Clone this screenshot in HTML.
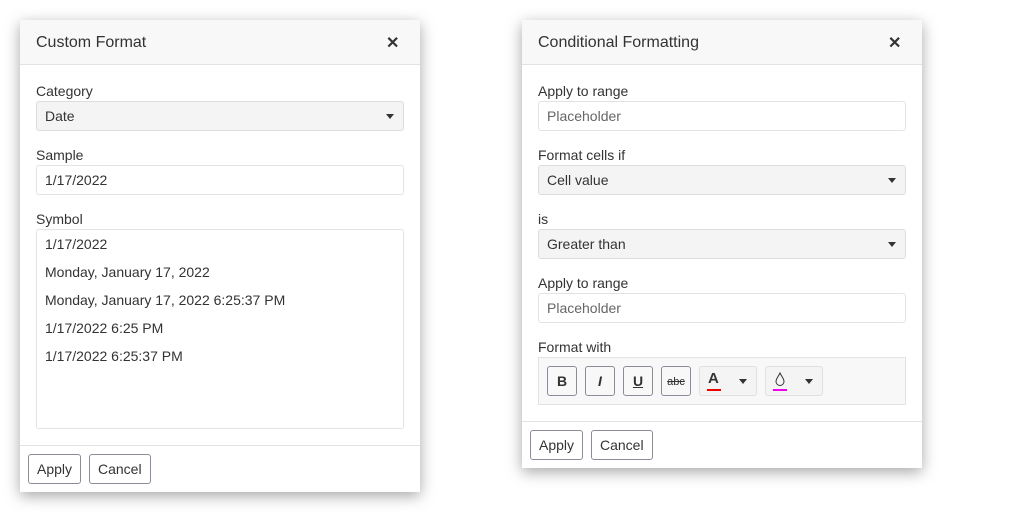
<!DOCTYPE html>
<html><head><style>
*{box-sizing:border-box;margin:0;padding:0}
body{width:1024px;height:512px;background:#fff;font-family:"Liberation Sans",sans-serif;color:#333;position:relative;overflow:hidden}
.dlg{position:absolute;background:#fff;box-shadow:0 4px 14px rgba(0,0,0,.35);width:400px}
.hd{height:45px;background:#f8f8f8;border-bottom:1px solid #e3e3e3;position:relative}
.hd span{position:absolute;left:16px;top:14px;font-size:16px;color:#333}
.hd b{position:absolute;left:366px;top:13px;font-size:16px;color:#333}
.a{position:absolute}
.lbl{font-size:14px;color:#333}
.fld{position:absolute;left:16px;width:368px;height:30px;border:1px solid #e3e3e3;border-radius:3px;font-size:14px;padding:6px 8px;background:#fff}
.sel{background:#f4f4f4;border-color:#ddd}
.sel:after{content:"";position:absolute;right:9px;top:12px;border-left:4px solid transparent;border-right:4px solid transparent;border-top:5px solid #333}
.ft{position:absolute;left:0;width:400px;border-top:1px solid #e3e3e3}
.btn{position:absolute;height:30px;border:1px solid #8e8a9a;border-radius:3px;font-size:14px;padding:6px 8px;background:#fff}
.tb{position:absolute;width:30px;height:30px;border:1px solid #8e8a9a;border-radius:3px;background:#f8f8f8;text-align:center;line-height:28px;font-size:14px}
.dd{position:absolute;width:58px;height:30px;border:1px solid #e0e0e0;border-radius:3px;background:#f4f4f4}
.dd:after{content:"";position:absolute;right:9px;top:12px;border-left:4px solid transparent;border-right:4px solid transparent;border-top:5px solid #333}
.it{position:absolute;left:8px;font-size:14px}
</style></head><body>
<div class="dlg" style="left:20px;top:20px;height:472px">
 <div class="hd"><span>Custom Format</span><b>✕</b></div>
 <div class="a lbl" style="left:16px;top:63px">Category</div>
 <div class="fld sel" style="top:81px">Date</div>
 <div class="a lbl" style="left:16px;top:127px">Sample</div>
 <div class="fld" style="top:145px">1/17/2022</div>
 <div class="a lbl" style="left:16px;top:191px">Symbol</div>
 <div class="fld" style="top:209px;height:200px;padding:0">
  <div class="it" style="top:6px">1/17/2022</div>
  <div class="it" style="top:34px">Monday, January 17, 2022</div>
  <div class="it" style="top:62px">Monday, January 17, 2022 6:25:37 PM</div>
  <div class="it" style="top:90px">1/17/2022 6:25 PM</div>
  <div class="it" style="top:118px">1/17/2022 6:25:37 PM</div>
 </div>
 <div class="ft" style="top:425px"></div>
 <div class="btn" style="left:8px;top:434px;width:53px">Apply</div>
 <div class="btn" style="left:69px;top:434px;width:62px">Cancel</div>
</div>
<div class="dlg" style="left:522px;top:20px;height:448px">
 <div class="hd"><span>Conditional Formatting</span><b>✕</b></div>
 <div class="a lbl" style="left:16px;top:63px">Apply to range</div>
 <div class="fld" style="top:81px;color:#666">Placeholder</div>
 <div class="a lbl" style="left:16px;top:127px">Format cells if</div>
 <div class="fld sel" style="top:145px">Cell value</div>
 <div class="a lbl" style="left:16px;top:191px">is</div>
 <div class="fld sel" style="top:209px">Greater than</div>
 <div class="a lbl" style="left:16px;top:255px">Apply to range</div>
 <div class="fld" style="top:273px;color:#666">Placeholder</div>
 <div class="a lbl" style="left:16px;top:319px">Format with</div>
 <div class="a" style="left:16px;top:337px;width:368px;height:48px;border:1px solid #e3e3e3;background:#f8f8f8"></div>
 <div class="tb" style="left:25px;top:346px;font-weight:bold">B</div>
 <div class="tb" style="left:63px;top:346px;font-style:italic;font-weight:bold">I</div>
 <div class="tb" style="left:101px;top:346px;font-weight:bold;text-decoration:underline">U</div>
 <div class="tb" style="left:139px;top:346px;font-size:11px;line-height:30px;text-decoration:line-through">abc</div>
 <div class="dd" style="left:177px;top:346px"><div class="a" style="left:8px;top:3px;font-size:15px;font-weight:bold">A</div><div class="a" style="left:7px;top:22px;width:14px;height:2px;background:#e00"></div></div>
 <div class="dd" style="left:243px;top:346px"><svg class="a" style="left:8px;top:5px" width="12" height="14" viewBox="0 0 12 14"><path d="M6 1C4 5 2 7 2 9.5a4 4 0 0 0 8 0C10 7 8 5 6 1z" fill="none" stroke="#333" stroke-width="1"/></svg><div class="a" style="left:7px;top:22px;width:14px;height:2px;background:#e0e"></div></div>
 <div class="ft" style="top:401px"></div>
 <div class="btn" style="left:8px;top:410px;width:53px">Apply</div>
 <div class="btn" style="left:69px;top:410px;width:62px">Cancel</div>
</div>
</body></html>
